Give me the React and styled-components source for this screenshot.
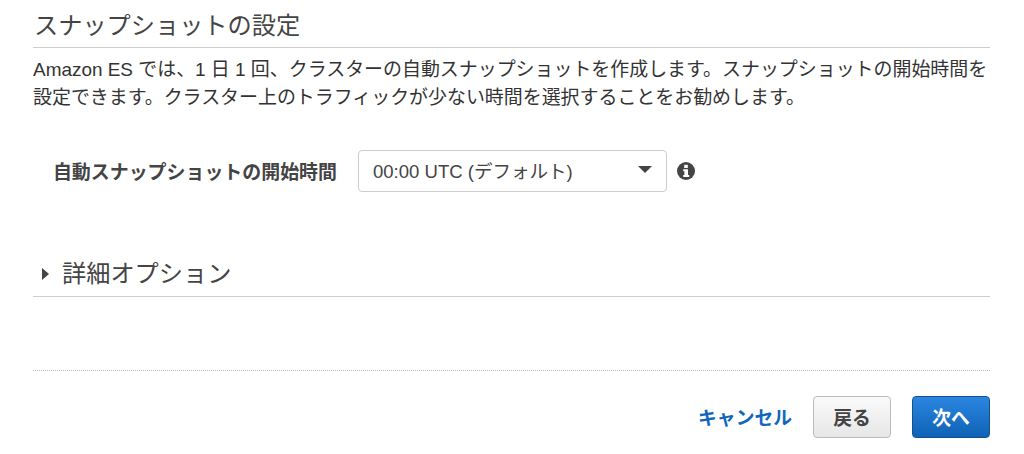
import React from "react";
import styled, { createGlobalStyle } from "styled-components";

const FONT = `"Liberation Sans", "Noto Sans CJK JP", sans-serif`;

const GlobalStyle = createGlobalStyle`
  html, body {
    margin: 0;
    padding: 0;
    background: #fff;
  }
  body {
    font-family: ${FONT};
    color: #444;
  }
`;

const Page = styled.div`
  width: 957px;
  height: 454px;
  margin-left: 33px;
  display: flex;
  flex-direction: column;
  overflow: hidden;
`;

const SectionHeader = styled.div`
  height: ${({ height }) => height};
  margin-top: ${({ top }) => top || "0"};
  padding-top: ${({ inset }) => inset || "0"};
  border-bottom: 1px solid #ccc;
  display: flex;
  align-items: center;
  gap: 12px;
  box-sizing: border-box;
`;

const SectionTitle = styled.h2`
  margin: 0 0 0 1px;
  font-size: 24.2px;
  line-height: 30px;
  font-weight: 400;
  color: #444;
`;

const Description = styled.p`
  margin: 8px 0 0;
  font-size: 18.94px;
  line-height: 28px;
  color: #333;
  white-space: nowrap;
`;

const FieldRow = styled.div`
  margin-top: 38px;
  display: flex;
  align-items: center;
`;

const FieldLabel = styled.label`
  width: 325px;
  padding: 0 21px 2px 0;
  box-sizing: border-box;
  text-align: right;
  white-space: nowrap;
  font-size: 18.95px;
  font-weight: 700;
  color: #444;
`;

const SelectBox = styled.div`
  width: 309px;
  height: 42px;
  box-sizing: border-box;
  padding: 0 14px 3px;
  border: 1px solid #ccc;
  border-radius: 4px;
  display: flex;
  align-items: center;
  justify-content: space-between;
  font-size: 18.55px;
  color: #444;
`;

const InfoIcon = styled.svg`
  width: 18px;
  height: 18px;
  margin-left: 10px;
`;

const Footer = styled.div`
  margin-top: 73px;
  border-top: 1px dotted #bbb;
  padding-top: 25px;
  display: flex;
  justify-content: flex-end;
  align-items: center;
`;

const CancelLink = styled.a`
  margin-right: 21px;
  padding-bottom: 2px;
  font-size: 18.8px;
  font-weight: 700;
  color: #1166bb;
`;

const Button = styled.button`
  width: ${({ width }) => width};
  height: 42px;
  margin-left: ${({ left }) => left || "0"};
  border-radius: 4px;
  font-family: ${FONT};
  font-size: 18.8px;
  font-weight: 700;
  padding: 0 0 2px;
  color: ${({ primary }) => (primary ? "#fff" : "#444")};
  border: 1px solid ${({ primary }) => (primary ? "#15508f" : "#bbb")};
  background: ${({ primary }) =>
    primary
      ? "linear-gradient(#2b86e0, #0f62b5)"
      : "linear-gradient(#fafafa, #e6e6e6)"};
`;

const Arrow = styled.svg`
  width: ${({ width }) => width}px;
  height: ${({ height }) => height}px;
  margin-left: ${({ left }) => left || 0}px;
  fill: #444;
  flex-shrink: 0;
`;

export default function App() {
  return (
    <Page>
      <GlobalStyle />
      <SectionHeader height="48px" inset="4px">
        <SectionTitle>スナップショットの設定</SectionTitle>
      </SectionHeader>
      <Description>
        Amazon ES では、1 日 1 回、クラスターの自動スナップショットを作成します。スナップショットの開始時間を
        <br />
        設定できます。クラスター上のトラフィックが少ない時間を選択することをお勧めします。
      </Description>
      <FieldRow>
        <FieldLabel>自動スナップショットの開始時間</FieldLabel>
        <SelectBox>
          <span>00:00 UTC (デフォルト)</span>
          <Arrow width="14" height="7" viewBox="0 0 14 7">
            <path d="M0 0h14L7 7z" />
          </Arrow>
        </SelectBox>
        <InfoIcon viewBox="0 0 18 18">
          <circle cx="9" cy="9" r="9" fill="#444" />
          <rect x="7.2" y="2.8" width="3.6" height="3.2" fill="#fff" />
          <path d="M6.2 7.2h4.8v5.8h1.2v2H6.2v-2h1.2V9.2H6.2z" fill="#fff" />
        </InfoIcon>
      </FieldRow>
      <SectionHeader height="45px" top="60px">
        <Arrow width="7" height="12" viewBox="0 0 7 12" left="9">
          <path d="M0 0l7 6-7 6z" />
        </Arrow>
        <SectionTitle>詳細オプション</SectionTitle>
      </SectionHeader>
      <Footer>
        <CancelLink>キャンセル</CancelLink>
        <Button width="78px">戻る</Button>
        <Button width="78px" left="21px" primary>
          次へ
        </Button>
      </Footer>
    </Page>
  );
}
